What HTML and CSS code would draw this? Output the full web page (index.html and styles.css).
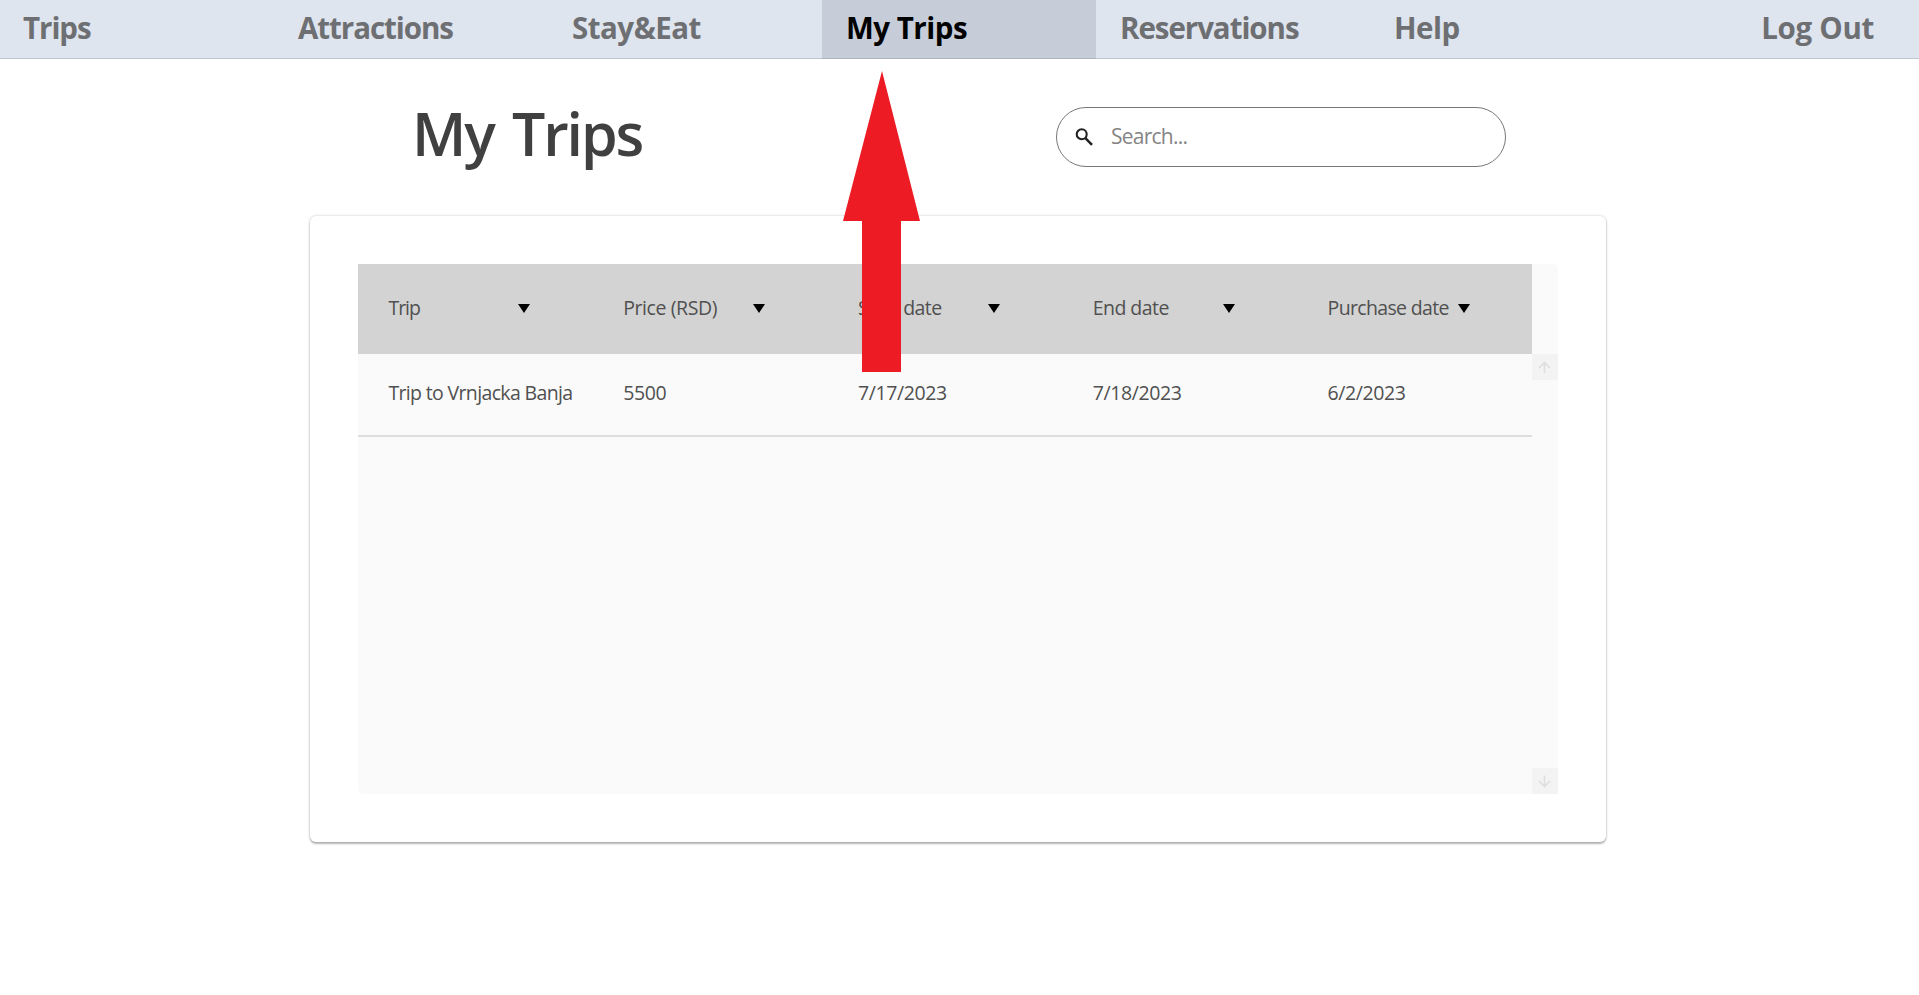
FILE: index.html
```html
<!DOCTYPE html>
<html lang="en">
<head>
<meta charset="utf-8">
<title>My Trips</title>
<link rel="stylesheet" href="styles.css">
</head>
<body>
<nav class="nav">
  <a class="tab first"><span class="tight">Trips</span></a>
  <a class="tab"><span class="tight">Attractions</span></a>
  <a class="tab"><span>Stay&amp;Eat</span></a>
  <a class="tab active"><span>My Trips</span></a>
  <a class="tab"><span class="tight">Reservations</span></a>
  <a class="tab help"><span>Help</span></a>
  <a class="tab logout"><span>Log Out</span></a>
</nav>
<header class="heading">
  <h1 class="title">My Trips</h1>
  <div class="search">
    <svg class="search-icon" viewBox="0 0 18 18"><circle cx="6.7" cy="6.3" r="5" fill="none" stroke="#222" stroke-width="2.1"/><path d="M10.4 10.2 17 16.8" stroke="#222" stroke-width="2.5"/></svg>
    <span class="placeholder">Search...</span>
  </div>
</header>
<main class="card">
  <section class="grid">
    <div class="table">
      <div class="row head">
        <div class="cell"><span class="trip">Trip</span><i class="sort"></i></div>
        <div class="cell"><span>Price (RSD)</span><i class="sort"></i></div>
        <div class="cell"><span class="date">Start date</span><i class="sort"></i></div>
        <div class="cell"><span class="date">End date</span><i class="sort"></i></div>
        <div class="cell"><span class="long">Purchase date</span><i class="sort"></i></div>
      </div>
      <div class="row data">
        <div class="cell"><span class="long">Trip to Vrnjacka Banja</span></div>
        <div class="cell"><span>5500</span></div>
        <div class="cell"><span>7/17/2023</span></div>
        <div class="cell"><span>7/18/2023</span></div>
        <div class="cell"><span>6/2/2023</span></div>
      </div>
    </div>
    <div class="scroll">
      <div class="scroll-btn"><svg viewBox="0 0 26 26"><path d="M12.500 19V9M7 14l5.500-5.500 5.500 5.500"/></svg></div>
      <div class="scroll-btn"><svg viewBox="0 0 26 26"><path d="M12.500 7.500v10.500M7 13l5.500 5.500 5.500-5.500"/></svg></div>
    </div>
  </section>
</main>
<svg class="pointer" viewBox="0 0 77 301"><path d="M39 0 77 150H58V301H19V150H0Z" fill="#ed1c24"/></svg>
</body>
</html>
```
FILE: styles.css
```css
* { box-sizing: border-box; }
body {
  margin: 0;
  min-height: 100vh;
  background: #fff;
  font-family: "Open Sans", "Noto Sans", sans-serif;
}
.nav {
  display: flex;
  height: 59px;
  background: #dfe5ef;
}
.tab {
  width: 274px;
  height: 59px;
  padding: 8px 0 0 24px;
  border-bottom: 1px solid #bfc6d3;
  font-size: 29.5px;
  line-height: 40px;
  font-weight: 700;
  letter-spacing: -.5px;
  color: #6d6f72;
  white-space: nowrap;
}
.tab .tight { letter-spacing: -1.05px; }
.tab.first { padding-left: 23px; }
.tab.active {
  background: #c7cdd8;
  border-color: #adb2bf;
  color: #000;
}
.tab.logout {
  width: auto;
  flex: 1;
  padding: 8px 45px 0 0;
  text-align: right;
  letter-spacing: -.3px;
}
.heading {
  display: flex;
  justify-content: space-between;
  align-items: flex-start;
  height: 157px;
  padding: 48px 413px 0 411px;
}
.title {
  margin: 0;
  padding-left: 1px;
  font-size: 59px;
  line-height: 52px;
  font-weight: 600;
  letter-spacing: -2.1px;
  word-spacing: 5px;
  color: #404040;
  white-space: nowrap;
}
.search {
  display: flex;
  align-items: center;
  width: 450px;
  height: 60px;
  padding-left: 18px;
  border: 1px solid #777;
  border-radius: 30px;
}
.search-icon { width: 18px; height: 18px; }
.placeholder {
  margin-left: 18px;
  padding-bottom: 2px;
  font-size: 21px;
  line-height: 30px;
  letter-spacing: -.75px;
  color: #858585;
}
.card {
  width: 1296px;
  height: 626px;
  margin-left: 310.4px;
  padding: 48px;
  border-radius: 6px;
  background: #fff;
  box-shadow: 0 2px 2px rgba(0,0,0,.26), 0 0 3px rgba(0,0,0,.22);
}
.grid {
  display: flex;
  width: 1200px;
  height: 530px;
  border-radius: 0 5px 0 5px;
  background: #fafafa;
  overflow: hidden;
}
.table { width: 1174px; }
.row {
  display: grid;
  grid-template-columns: repeat(5, 234.8px);
  font-size: 19.5px;
  letter-spacing: -.4px;
  color: #505050;
}
.head { height: 90px; background: #d3d3d3; }
.data { height: 83px; border-bottom: 2px solid #dedede; }
.cell {
  display: flex;
  align-items: center;
  padding-left: 30px;
  white-space: nowrap;
}
.cell span { width: 130px; padding-bottom: 3px; }
.data .cell span { padding-bottom: 5px; }
.cell .trip { letter-spacing: -1px; }
.cell .date { letter-spacing: -.55px; }
.cell .long { letter-spacing: -.65px; }
.sort {
  margin-bottom: 1px;
  border: 6px solid transparent;
  border-top: 9px solid #000;
  border-bottom: 0;
}
.scroll {
  display: flex;
  flex-direction: column;
  justify-content: space-between;
  width: 26px;
  padding-top: 90px;
}
.scroll-btn { height: 26px; background: #f3f3f3; }
.scroll-btn svg { display: block; width: 26px; height: 26px; fill: none; stroke: #dfdfdf; stroke-width: 1.7; }
.pointer {
  position: absolute;
  left: 843px;
  top: 71px;
  width: 77px;
  height: 301px;
}
```
